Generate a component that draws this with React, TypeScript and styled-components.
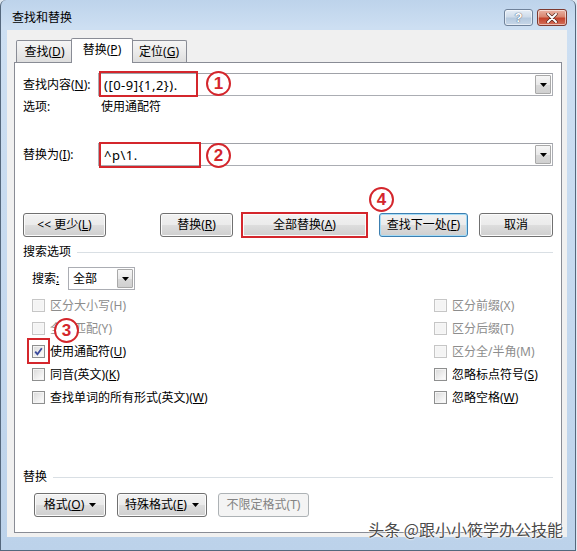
import React from 'react';
import styled, { createGlobalStyle } from 'styled-components';

const GlobalStyle = createGlobalStyle`
  html, body { margin: 0; padding: 0; background: #dfe8f2; }
  body {
    font-family: "Noto Sans", "Noto Sans CJK SC", sans-serif;
    font-size: 12px;
    color: #000;
  }
  * { box-sizing: border-box; }
`;

const Window = styled.div`
  position: relative;
  width: 576px;
  height: 551px;
  display: flex;
  flex-direction: column;
  background: linear-gradient(180deg, #bdd3eb 0px, #cddff2 28px, #c4d8ee 60%, #bcd2ea 100%);
  border-left: 1px solid #55687d;
  border-right: 1px solid #55687d;
  border-bottom: 1px solid #55687d;
  border-radius: 6px 6px 0 0;
`;

const TitleBar = styled.div`
  height: 30px;
  display: flex;
  align-items: flex-start;
  padding-left: 11px;
`;

const Title = styled.div`
  padding-top: 10px;
  line-height: 16px;
  font-size: 12px;
  color: #000;
`;

const CaptionButtons = styled.div`
  margin-left: auto;
  margin-top: 9px;
  margin-right: 8px;
  display: flex;
  gap: 4px;
`;

const CaptionButton = styled.div<{ $close?: boolean }>`
  width: ${p => (p.$close ? 30 : 29)}px;
  height: 17px;
  border-radius: 3px;
  border: 1px solid ${p => (p.$close ? '#7d3a30' : '#6f829a')};
  background: ${p =>
    p.$close
      ? 'linear-gradient(180deg, #eab3a5 0%, #d98670 45%, #c4432c 55%, #d3705a 100%)'
      : 'linear-gradient(180deg, #e6eef7 0%, #cfdcea 45%, #b5c9de 55%, #c7d7e8 100%)'};
  box-shadow: inset 0 0 0 1px rgba(255, 255, 255, 0.55);
  display: flex;
  align-items: center;
  justify-content: center;
  color: #fff;
  font-family: "Liberation Sans", sans-serif;
  font-weight: bold;
  font-size: 13px;
  text-shadow: 0 0 1px #4b5d73, 0 0 1px #4b5d73;
`;

const Client = styled.div`
  flex: 1;
  margin: 0 8px 13px 6px;
  background: #f0f0f0;
  padding: 8px 5px 4px 7px;
  display: flex;
  flex-direction: column;
`;

const TabStrip = styled.div`
  display: flex;
  align-items: flex-end;
  height: 25px;
  margin-bottom: -1px;
  padding-left: 2px;
  position: relative;
  z-index: 1;
`;

const Tab = styled.div<{ $active?: boolean; $w: number }>`
  width: ${p => p.$w}px;
  height: ${p => (p.$active ? 25 : 22)}px;
  margin: ${p => (p.$active ? '0 -2px 0 -2px' : '0 0 1px 0')};
  position: relative;
  z-index: ${p => (p.$active ? 2 : 1)};
  border: 1px solid #898c95;
  border-bottom: none;
  border-radius: 2px 2px 0 0;
  background: ${p =>
    p.$active ? '#ffffff' : 'linear-gradient(180deg, #f5f5f5 0%, #ebebeb 50%, #dedede 100%)'};
  display: flex;
  align-items: center;
  justify-content: center;
  padding-bottom: ${p => (p.$active ? 2 : 0)}px;
  line-height: 16px;
`;

const Panel = styled.div`
  flex: 1;
  border: 1px solid #898c95;
  background: #ffffff;
  display: flex;
  flex-direction: column;
  padding: 10px 8px 15px 8px;
`;

const FieldRow = styled.div<{ $mt?: number }>`
  display: flex;
  align-items: center;
  height: 23px;
  margin-top: ${p => p.$mt ?? 0}px;
  position: relative;
`;

const FieldLabel = styled.div`
  width: 75px;
  line-height: 16px;
`;

const Combo = styled.div`
  flex: 1;
  height: 23px;
  border: 1px solid #abadb3;
  border-top-color: #a0a2a8;
  position: relative;
  display: flex;
  align-items: center;
  padding: 1px 1px 1px 5px;
`;

const ComboText = styled.span`
  font-size: 13px;
  letter-spacing: 0.5px;
  line-height: 16px;
`;

const DropButton = styled.div<{ $h?: number }>`
  margin-left: auto;
  width: 16px;
  height: ${p => p.$h ?? 19}px;
  border: 1px solid #a9a9a9;
  border-radius: 1px;
  background: linear-gradient(180deg, #f6f6f6 0%, #e9e9e9 50%, #d9d9d9 51%, #d0d0d0 100%);
  display: flex;
  align-items: center;
  justify-content: center;
`;

const MarkBox = styled.div<{ $w: number; $h: number; $top: number; $left: number }>`
  position: absolute;
  top: ${p => p.$top}px;
  left: ${p => p.$left}px;
  width: ${p => p.$w}px;
  height: ${p => p.$h}px;
  border: 2px solid #d4262c;
  pointer-events: none;
`;

const Circle = styled.span<{ $top: number; $left: number }>`
  position: absolute;
  top: ${p => p.$top}px;
  left: ${p => p.$left}px;
  width: 25px;
  height: 25px;
  border: 2px solid #d4262c;
  border-radius: 50%;
  background: #ffffff;
  color: #d4262c;
  font-family: "Liberation Sans", sans-serif;
  font-weight: bold;
  font-size: 17px;
  line-height: 21px;
  text-align: center;
  z-index: 3;
`;

const OptionsRow = styled.div`
  display: flex;
  align-items: center;
  height: 22px;
  line-height: 16px;
`;

const OptionsLabel = styled.div`
  width: 78px;
`;

const ButtonRow = styled.div<{ $mt: number; $pl?: number }>`
  display: flex;
  align-items: center;
  height: 24px;
  margin-top: ${p => p.$mt}px;
  padding-left: ${p => p.$pl ?? 0}px;
  position: relative;
`;

const Button = styled.div<{ $w: number; $ml?: number; $focus?: boolean; $marked?: boolean; $disabled?: boolean }>`
  position: relative;
  width: ${p => p.$w}px;
  height: ${p => (p.$marked ? 26 : 24)}px;
  margin-left: ${p => p.$ml ?? 0}px;
  border: ${p =>
    p.$marked ? '2px solid #d4262c' : p.$focus ? '1px solid #3c7fb1' : p.$disabled ? '1px solid #adb2b5' : '1px solid #707070'};
  border-radius: ${p => (p.$marked ? 0 : 3)}px;
  background: ${p =>
    p.$disabled
      ? '#f4f4f4'
      : 'linear-gradient(180deg, #f2f2f2 0%, #ebebeb 48%, #dddddd 52%, #cfcfcf 100%)'};
  box-shadow: ${p =>
    p.$focus ? 'inset 0 0 0 1px #a5dcf7' : p.$disabled ? 'none' : 'inset 0 0 0 1px #fbfbfb'};
  display: flex;
  align-items: center;
  justify-content: center;
  gap: 5px;
  color: ${p => (p.$disabled ? '#838383' : '#000')};
  line-height: 16px;
  white-space: nowrap;
`;

const GroupHeader = styled.div<{ $mt?: string }>`
  display: flex;
  align-items: center;
  height: 16px;
  margin-top: ${p => p.$mt ?? '0'};
  line-height: 16px;
`;

const GroupLine = styled.div`
  flex: 1;
  margin-left: 6px;
  border-top: 1px solid #d9dfe4;
`;

const SearchRow = styled.div`
  display: flex;
  align-items: center;
  height: 23px;
  margin-top: 7px;
  padding-left: 9px;
  line-height: 16px;
`;

const SearchLabel = styled.div`
  width: 36px;
`;

const Select = styled.div`
  width: 67px;
  height: 23px;
  border: 1px solid #abadb3;
  display: flex;
  align-items: center;
  padding: 1px 1px 1px 4px;
`;

const CheckGrid = styled.div`
  display: grid;
  grid-template-columns: 402px 1fr;
  grid-auto-rows: 23px;
  margin-top: 4px;
  padding-left: 9px;
`;

const CheckItem = styled.div<{ $disabled?: boolean }>`
  position: relative;
  display: flex;
  align-items: center;
  color: ${p => (p.$disabled ? '#8d8d8d' : '#000')};
  line-height: 16px;
  white-space: nowrap;
`;

const Box = styled.span<{ $disabled?: boolean }>`
  width: 13px;
  height: 13px;
  margin-right: 5px;
  border: 1px solid ${p => (p.$disabled ? '#c6c6c6' : '#8e8f8f')};
  background: ${p =>
    p.$disabled ? '#f4f4f4' : 'linear-gradient(135deg, #d8d8d8 0%, #f0f0f0 60%, #ffffff 100%)'};
  box-shadow: inset 0 0 0 1px ${p => (p.$disabled ? '#f7f7f7' : '#f4f4f4')};
  display: flex;
  align-items: center;
  justify-content: center;
  flex: none;
`;

const Watermark = styled.div`
  position: absolute;
  right: 12px;
  bottom: 12px;
  font-family: "Noto Sans CJK SC", sans-serif;
  font-size: 16px;
  line-height: 18px;
  color: #4a4a4a;
  text-shadow: 0 0 2px #ffffff, 0 0 2px #ffffff, 0 0 1px #ffffff;
  white-space: nowrap;
`;

const Arrow = () => (
  <svg width="7" height="4" viewBox="0 0 7 4">
    <polygon points="0,0 7,0 3.5,4" fill="#000" />
  </svg>
);

const Check = () => (
  <svg width="9" height="9" viewBox="0 0 9 9">
    <path d="M1.2 4.6 L3.4 7.2 L7.8 1.2" fill="none" stroke="#3a4a9c" strokeWidth="1.8" />
  </svg>
);

const CloseGlyph = () => (
  <svg width="12" height="10" viewBox="0 0 12 10">
    <path d="M2 1 L10 9 M10 1 L2 9" stroke="#4a2018" strokeWidth="3.2" strokeLinecap="round" />
    <path d="M2 1 L10 9 M10 1 L2 9" stroke="#ffffff" strokeWidth="2" strokeLinecap="round" />
  </svg>
);

type Opt = { text: React.ReactNode; disabled?: boolean; checked?: boolean; extra?: React.ReactNode };

const leftOpts: Opt[] = [
  { text: '区分大小写(H)', disabled: true },
  { text: '全字匹配(Y)', disabled: true, extra: <Circle $top={1} $left={22}>3</Circle> },
  {
    text: <>使用通配符(<u>U</u>)</>,
    checked: true,
    extra: <MarkBox $w={23} $h={26} $top={-2} $left={-5} />,
  },
  { text: <>同音(英文)(<u>K</u>)</> },
  { text: <>查找单词的所有形式(英文)(<u>W</u>)</> },
];

const rightOpts: Opt[] = [
  { text: '区分前缀(X)', disabled: true },
  { text: '区分后缀(T)', disabled: true },
  { text: '区分全/半角(M)', disabled: true },
  { text: <>忽略标点符号(<u>S</u>)</> },
  { text: <>忽略空格(<u>W</u>)</> },
];

const OptionCell = ({ o }: { o: Opt }) => (
  <CheckItem $disabled={o.disabled}>
    <Box $disabled={o.disabled}>{o.checked && <Check />}</Box>
    <span>{o.text}</span>
    {o.extra}
  </CheckItem>
);

export default function App() {
  return (
    <>
      <GlobalStyle />
      <Window>
        <TitleBar>
          <Title>查找和替换</Title>
          <CaptionButtons>
            <CaptionButton>?</CaptionButton>
            <CaptionButton $close>
              <CloseGlyph />
            </CaptionButton>
          </CaptionButtons>
        </TitleBar>
        <Client>
          <TabStrip>
            <Tab $w={57}><span>查找(<u>D</u>)</span></Tab>
            <Tab $w={62} $active><span>替换(<u>P</u>)</span></Tab>
            <Tab $w={56}><span>定位(<u>G</u>)</span></Tab>
          </TabStrip>
          <Panel>
            <FieldRow>
              <FieldLabel>查找内容(<u>N</u>):</FieldLabel>
              <Combo>
                <ComboText>([0-9]{'{'}1,2{'}'}).</ComboText>
                <DropButton>
                  <Arrow />
                </DropButton>
                <MarkBox $w={99} $h={26} $top={-3} $left={0} />
                <Circle $top={-3} $left={107}>1</Circle>
              </Combo>
            </FieldRow>
            <OptionsRow>
              <OptionsLabel>选项:</OptionsLabel>
              <span>使用通配符</span>
            </OptionsRow>
            <FieldRow $mt={25}>
              <FieldLabel>替换为(<u>I</u>):</FieldLabel>
              <Combo>
                <ComboText>^p\1.</ComboText>
                <DropButton>
                  <Arrow />
                </DropButton>
                <MarkBox $w={102} $h={26} $top={-2} $left={0} />
                <Circle $top={-1} $left={107}>2</Circle>
              </Combo>
            </FieldRow>
            <ButtonRow $mt={47}>
              <Button $w={83}><span>&lt;&lt; 更少(<u>L</u>)</span></Button>
              <Button $w={73} $ml={54}><span>替换(<u>R</u>)</span></Button>
              <Button $w={127} $ml={8} $marked>
                <span>全部替换(<u>A</u>)</span>
                <Circle $top={-27} $left={126}>4</Circle>
              </Button>
              <Button $w={89} $ml={11} $focus><span>查找下一处(<u>F</u>)</span></Button>
              <Button $w={74} $ml={11}><span>取消</span></Button>
            </ButtonRow>
            <GroupHeader $mt="7px">
              <span>搜索选项</span>
              <GroupLine />
            </GroupHeader>
            <SearchRow>
              <SearchLabel>搜索<u>:</u></SearchLabel>
              <Select>
                <span>全部</span>
                <DropButton>
                  <Arrow />
                </DropButton>
              </Select>
            </SearchRow>
            <CheckGrid>
              {leftOpts.map((o, i) => (
                <React.Fragment key={i}>
                  <OptionCell o={o} />
                  <OptionCell o={rightOpts[i]} />
                </React.Fragment>
              ))}
            </CheckGrid>
            <GroupHeader $mt="auto">
              <span>替换</span>
              <GroupLine />
            </GroupHeader>
            <ButtonRow $mt={8} $pl={11}>
              <Button $w={72}>
                <span>格式(<u>O</u>)</span>
                <Arrow />
              </Button>
              <Button $w={90} $ml={11}>
                <span>特殊格式(<u>E</u>)</span>
                <Arrow />
              </Button>
              <Button $w={91} $ml={11} $disabled><span>不限定格式(T)</span></Button>
            </ButtonRow>
          </Panel>
        </Client>
        <Watermark>头条 @跟小小筱学办公技能</Watermark>
      </Window>
    </>
  );
}
